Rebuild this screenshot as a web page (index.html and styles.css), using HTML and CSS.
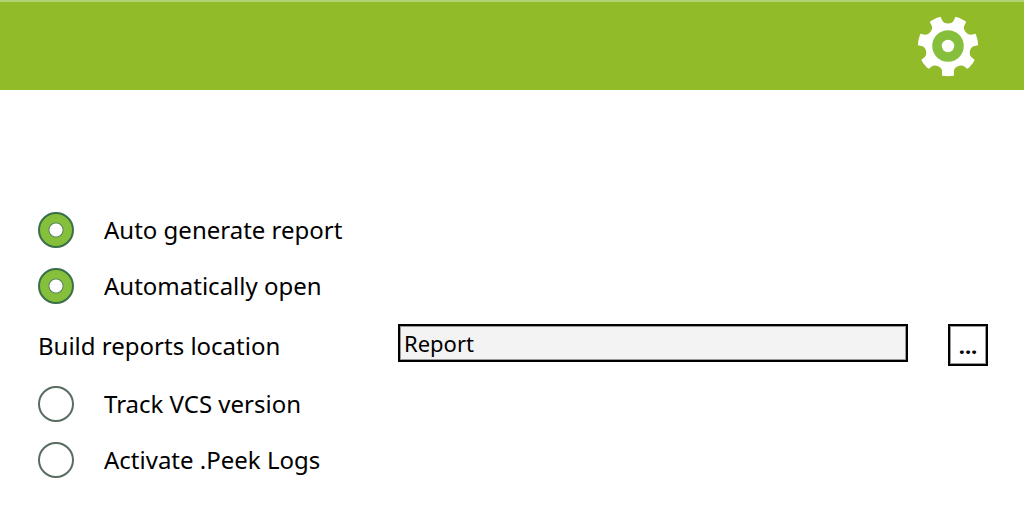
FILE: index.html
```html
<!DOCTYPE html>
<html lang="en">
<head>
<meta charset="utf-8">
<meta name="viewport" content="width=device-width, initial-scale=1">
<title>Report settings</title>
<link rel="stylesheet" href="styles.css">
</head>
<body>
<header class="banner">
  <svg class="gear" viewBox="-31 -31 62 62" aria-hidden="true">
    <defs>
      <mask id="teeth" maskUnits="userSpaceOnUse" x="-31" y="-31" width="62" height="62">
        <rect x="-31" y="-31" width="62" height="62" fill="#fff"/>
        <g fill="#000">
          <path id="notch" d="M-8.800-32L-6-26Q-4.500-22.500 0-22.500Q4.500-22.500 6-26L8.800-32Z"/>
          <use href="#notch" transform="rotate(51.430)"/>
          <use href="#notch" transform="rotate(102.860)"/>
          <use href="#notch" transform="rotate(154.290)"/>
          <use href="#notch" transform="rotate(205.710)"/>
          <use href="#notch" transform="rotate(257.140)"/>
          <use href="#notch" transform="rotate(308.570)"/>
        </g>
      </mask>
    </defs>
    <circle r="30.200" fill="#fff" mask="url(#teeth)"/>
    <circle r="11" fill="none" stroke="#86bf3c" stroke-width="9.500"/>
  </svg>
</header>
<main>
  <form class="settings">
    <label class="option"><input class="toggle" type="checkbox" checked>Auto generate report</label>
    <label class="option"><input class="toggle" type="checkbox" checked>Automatically open</label>
    <div class="location">
      <label class="location-label" for="location">Build reports location</label>
      <input class="path" id="location" type="text" value="Report">
      <button class="browse" type="button" aria-label="Browse">...</button>
    </div>
    <label class="option"><input class="toggle" type="checkbox">Track VCS version</label>
    <label class="option"><input class="toggle" type="checkbox">Activate .Peek Logs</label>
  </form>
</main>
</body>
</html>
```
FILE: styles.css
```css
* {
  box-sizing: border-box;
}

body {
  margin: 0;
  background: #fff;
  color: #000;
  font-family: "Noto Sans", "Open Sans", sans-serif;
  font-size: 24px;
  line-height: 36px;
}

.banner {
  display: flex;
  align-items: center;
  justify-content: flex-end;
  height: 90px;
  padding-right: 45px;
  border-top: 2px solid #b3d271;
  background: #92bb29;
}

.gear {
  width: 62px;
  height: 62px;
}

.settings {
  display: flex;
  flex-direction: column;
  gap: 20px;
  padding: 122px 36px 52px 38px;
}

.option {
  display: flex;
  align-items: center;
  gap: 30px;
}

.toggle {
  appearance: none;
  flex: none;
  width: 36px;
  height: 36px;
  margin: 0;
  border: 2px solid #5a6c61;
  border-radius: 50%;
  background: #fff;
}

.toggle:checked {
  border-color: #397048;
  background: radial-gradient(circle, #fff 6px, #57835a 7px, #86bf3c 8px);
}

.location {
  display: flex;
  align-items: flex-start;
}

.location-label {
  width: 360px;
  padding-top: 4px;
}

.path {
  flex: 1;
  min-width: 0;
  height: 38px;
  margin-right: 40px;
  padding: 0 4px;
  border: 2px solid #000;
  border-radius: 0;
  box-shadow: inset 0 0 0 1px #999;
  background: #f3f3f3;
  color: #000;
  font: inherit;
  font-size: 22px;
}

.browse {
  width: 40px;
  height: 42px;
  padding: 0;
  border: 2px solid #000;
  border-radius: 0;
  box-shadow: inset 0 0 0 1px #999;
  background: #fff;
  color: #000;
  font: inherit;
  font-size: 22px;
  font-weight: 700;
  line-height: 32px;
}
```
